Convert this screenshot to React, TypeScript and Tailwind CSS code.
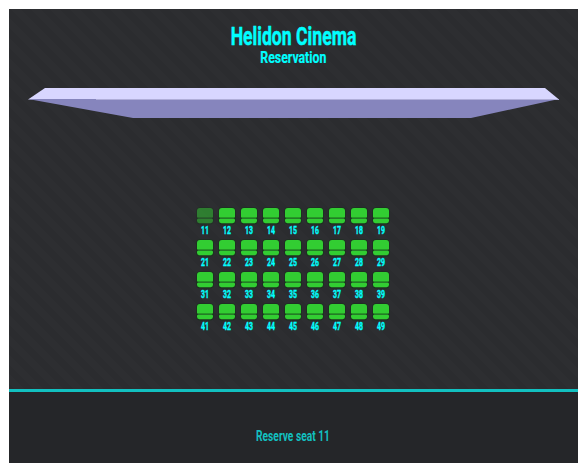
const rows = [1, 2, 3, 4];
const cols = [1, 2, 3, 4, 5, 6, 7, 8, 9];

function Screen() {
  return (
    <svg className="mt-[79px] ml-[19px] block h-[30px] w-[531px] shrink-0" viewBox="0 0 531 30">
      <path d="M0 11.5 17 0H517L531 11.5Z" fill="#d8d6ff" />
      <path d="M0 11H531L443 30H105Z" fill="#8685bd" />
      <path d="M68 11.5H531" stroke="#b0aed9" strokeWidth="1" />
    </svg>
  );
}

function Seat({ id, selected }: { id: string; selected: boolean }) {
  return (
    <div className="flex h-8 w-[22px] flex-col items-center">
      <svg className={selected ? "h-[18px] w-[18px] opacity-50" : "h-[18px] w-[18px]"} viewBox="0 0 18 18">
        <rect x=".2" y=".2" width="17.6" height="17.3" rx="3.8" fill="#1c3020" />
        <path d="M4 1H14Q17 1 17 4V9.3Q17 10.8 15.8 11H2.2Q1 10.8 1 9.3V4Q1 1 4 1Z" fill="#32cd32" />
        <path d="M2.2 11.6H15.8Q17 11.8 17 13V13.8Q17 16.2 14.6 16.2H3.4Q1 16.2 1 13.8V13Q1 11.8 2.2 11.6Z" fill="#32cd32" />
        <path d="M1.5 10.7H16.5" stroke="#1d701f" strokeWidth=".7" />
      </svg>
      <span className="h-[12px] scale-x-[0.66] text-[10.5px] leading-[12px] font-bold text-[#00ffff] [-webkit-text-stroke:0.35px_#00ffff]">{id}</span>
    </div>
  );
}

export default function App() {
  return (
    <div className="h-[472px] w-[588px] bg-white p-[9px] font-['Roboto','Liberation_Sans',sans-serif]">
      <main className="flex h-[454px] w-[569px] flex-col overflow-hidden bg-[repeating-linear-gradient(45deg,#2d2e31_0px,#2d2e31_7px,#2b2c2f_7px,#2b2c2f_14px)]">
        <div className="grid">
          <header className="col-start-1 row-start-1 flex flex-col items-center text-[#00ffff]">
            <h1 className="mt-[11px] h-[30px] scale-x-[0.665] text-[26.5px] leading-[31px] font-bold whitespace-nowrap [-webkit-text-stroke:0.5px_#00ffff]">Helidon Cinema</h1>
            <h2 className="-mt-[2px] h-[20px] scale-x-[0.745] text-[16.5px] leading-[20px] font-bold whitespace-nowrap [-webkit-text-stroke:0.2px_#00ffff]">Reservation</h2>
          </header>
          <div className="col-start-1 row-start-1"><Screen /></div>
        </div>
        <div className="mt-[89px] grid w-[199px] grid-cols-[repeat(9,22px)] self-center">
          {rows.flatMap((r) => cols.map((c) => <Seat key={`${r}${c}`} id={`${r}${c}`} selected={r === 1 && c === 1} />))}
        </div>
        <footer className="mt-auto flex h-[74px] shrink-0 justify-center border-t-[3px] border-[#12c0c0] bg-[#252629]">
          <button className="mt-[34px] mr-px h-5 scale-x-[0.66] text-[15.5px] leading-5 font-bold whitespace-nowrap text-[#12c0c0]">Reserve seat 11</button>
        </footer>
      </main>
    </div>
  );
}
